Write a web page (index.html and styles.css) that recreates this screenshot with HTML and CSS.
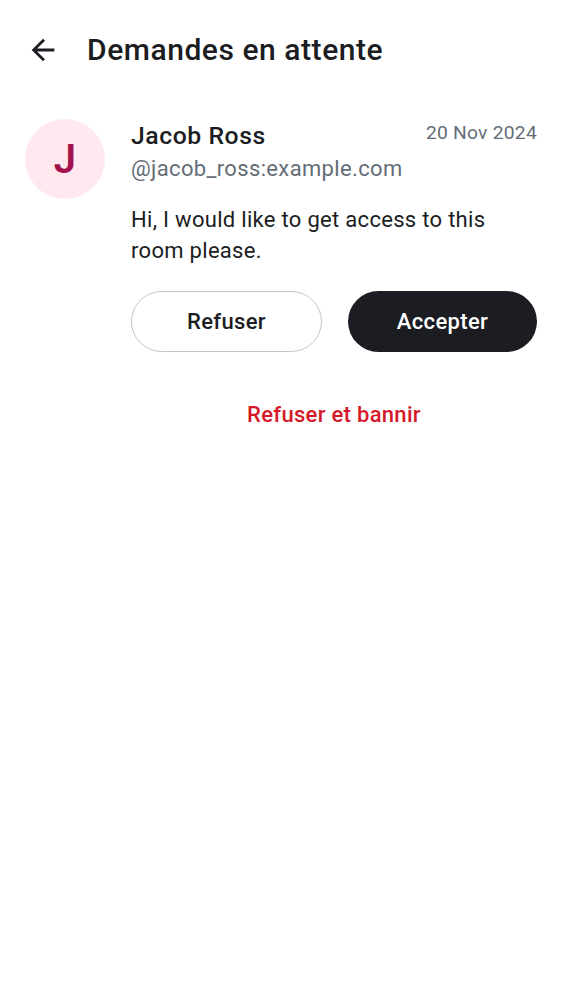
FILE: index.html
```html
<!DOCTYPE html>
<html lang="fr">
<head>
<meta charset="utf-8">
<link rel="stylesheet" href="styles.css">
</head>
<body>
<header class="topbar">
  <button class="back" aria-label="Retour">
    <svg width="34" height="34" viewBox="0 0 24 24"><path d="M20 11H7.83l5.59-5.59L12 4l-8 8 8 8 1.41-1.41L7.83 13H20v-2z" fill="#1b1d22"/></svg>
  </button>
  <h1 class="title">Demandes en attente</h1>
</header>
<main class="request">
  <div class="avatar">J</div>
  <div class="content">
    <div class="head">
      <div class="names">
        <div class="name">Jacob Ross</div>
        <div class="handle">@jacob_ross:example.com</div>
      </div>
      <div class="date">20 Nov 2024</div>
    </div>
    <p class="message">Hi, I would like to get access to this room please.</p>
    <div class="actions">
      <button class="btn btn-outline">Refuser</button>
      <button class="btn btn-solid">Accepter</button>
    </div>
    <button class="ban">Refuser et bannir</button>
  </div>
</main>
</body>
</html>
```

FILE: styles.css
```css
* { box-sizing: border-box; }
body {
  margin: 0;
  background: #fff;
  font-family: Roboto, "Noto Sans", sans-serif;
  color: #1b1d22;
}
.topbar {
  display: flex;
  align-items: center;
  height: 100px;
  padding-left: 26px;
}
.back {
  border: 0;
  background: none;
  padding: 0;
  width: 34px;
  height: 34px;
  display: flex;
}
.title {
  margin: 0 0 0 27px;
  font-size: 30px;
  line-height: 36px;
  font-weight: 500;
  letter-spacing: 0.55px;
}
.request {
  display: flex;
  padding: 18px 25px 0 25px;
  gap: 26px;
}
.avatar {
  flex: none;
  width: 80px;
  height: 80px;
  margin-top: 1px;
  border-radius: 50%;
  background: #ffe8ee;
  color: #a3114f;
  font-size: 40px;
  font-weight: 600;
  display: flex;
  align-items: center;
  justify-content: center;
}
.content { flex: 1; }
.head {
  display: flex;
  justify-content: space-between;
  align-items: flex-start;
}
.name {
  font-size: 24.75px;
  font-weight: 500;
  line-height: 35px;
  letter-spacing: 0.55px;
}
.handle {
  font-size: 22px;
  color: #656d77;
  line-height: 31px;
  letter-spacing: 0.35px;
}
.date {
  font-size: 19.25px;
  color: #656d77;
  line-height: 29px;
  letter-spacing: 0.25px;
}
.message {
  margin: 20px 0 0;
  font-size: 22px;
  line-height: 31px;
  letter-spacing: 0.3px;
}
.actions {
  display: flex;
  gap: 26px;
  margin-top: 25px;
}
.btn {
  flex: 1;
  height: 61px;
  border-radius: 31px;
  font-family: inherit;
  font-size: 22px;
  font-weight: 500;
  letter-spacing: 0.35px;
  padding: 0;
}
.btn-outline {
  background: #fff;
  border: 1.5px solid #c2c7ce;
  color: #1b1d22;
}
.btn-solid {
  background: #1b1d22;
  border: 0;
  color: #fff;
}
.ban {
  display: block;
  width: 100%;
  margin-top: 40px;
  border: 0;
  background: none;
  font-family: inherit;
  font-size: 22px;
  font-weight: 500;
  color: #d51928;
  letter-spacing: 0.3px;
  padding: 0;
  line-height: 46px;
}
```
